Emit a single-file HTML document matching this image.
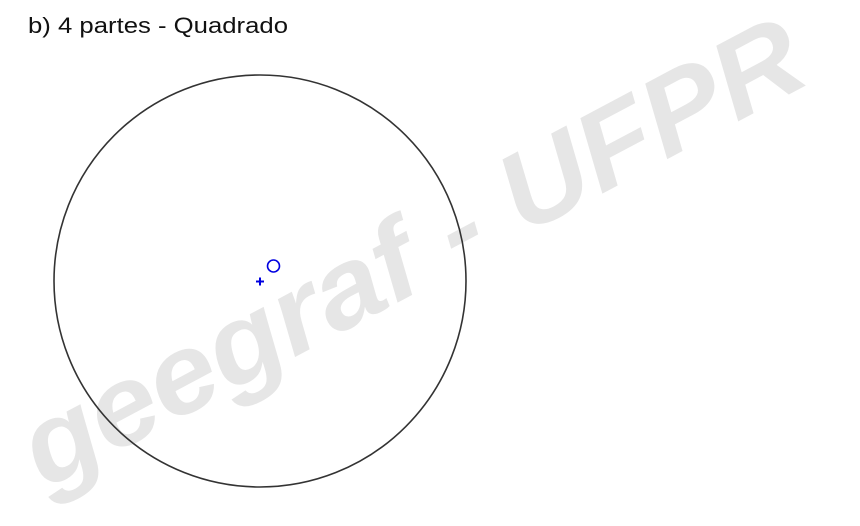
<!DOCTYPE html>
<html><head><style>html,body{margin:0;padding:0;background:#fff;overflow:hidden}</style></head>
<body>
<svg width="860" height="521" xmlns="http://www.w3.org/2000/svg">
<text x="0" y="0" transform="translate(45,490) rotate(-28)" font-family="Liberation Sans, sans-serif" font-weight="bold" font-style="italic" font-size="112" fill="#e6e6e6" textLength="870" lengthAdjust="spacingAndGlyphs">geegraf - UFPR</text>
<text x="28" y="33" font-family="Liberation Sans, sans-serif" font-size="22" fill="#111" textLength="260" lengthAdjust="spacingAndGlyphs">b) 4 partes - Quadrado</text>
<circle cx="260" cy="281" r="206" fill="none" stroke="#333" stroke-width="1.6"/>
<circle cx="273.5" cy="266" r="6" fill="none" stroke="#0000e0" stroke-width="1.6"/>
<path d="M256 281.5h8M260 277.5v8" stroke="#0000e0" stroke-width="2"/>
</svg>
</body></html>
